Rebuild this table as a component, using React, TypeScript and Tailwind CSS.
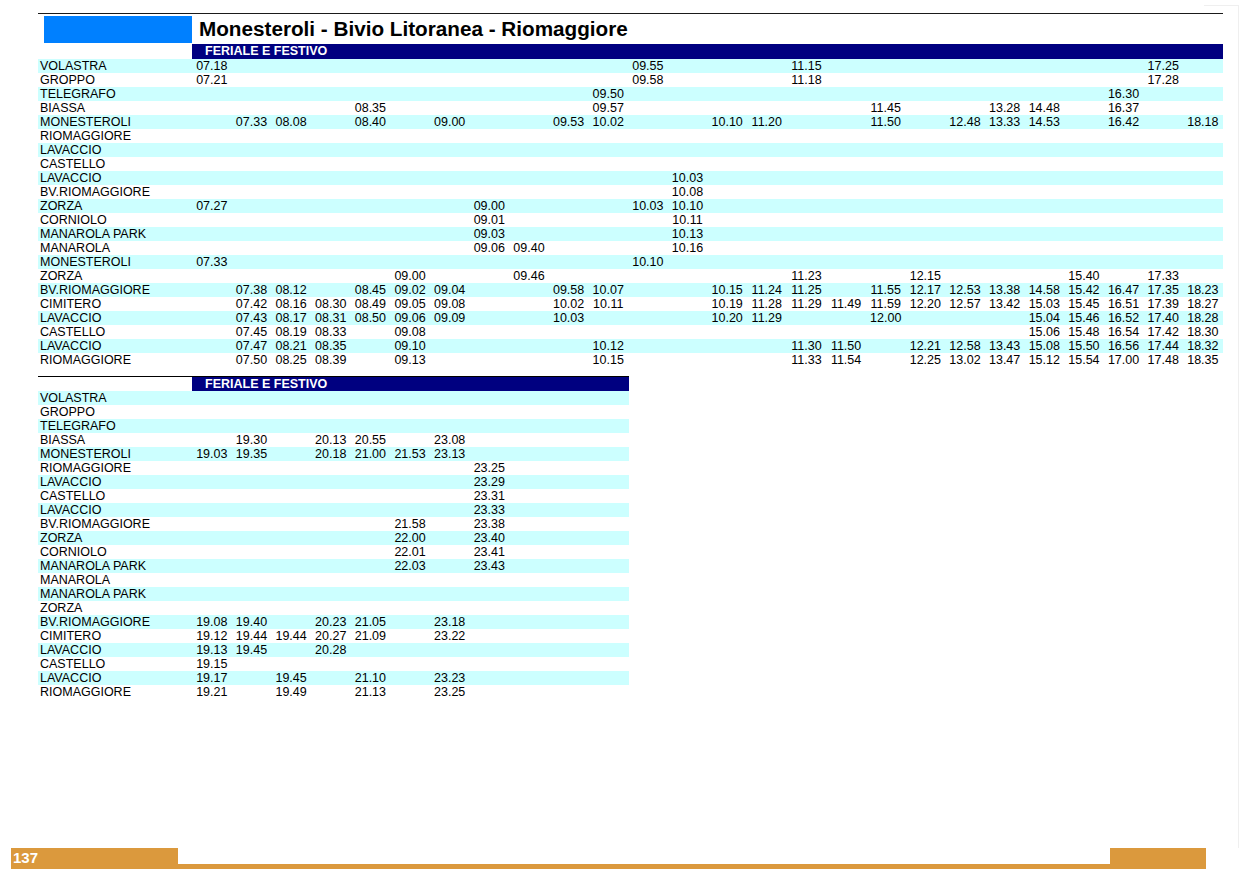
const STOPS_A = [
  ["VOLASTRA", "0:07.18 11:09.55 15:11.15 24:17.25"],
  ["GROPPO", "0:07.21 11:09.58 15:11.18 24:17.28"],
  ["TELEGRAFO", "10:09.50 23:16.30"],
  ["BIASSA", "4:08.35 10:09.57 17:11.45 20:13.28 21:14.48 23:16.37"],
  ["MONESTEROLI", "1:07.33 2:08.08 4:08.40 6:09.00 9:09.53 10:10.02 13:10.10 14:11.20 17:11.50 19:12.48 20:13.33 21:14.53 23:16.42 25:18.18"],
  ["RIOMAGGIORE", ""],
  ["LAVACCIO", ""],
  ["CASTELLO", ""],
  ["LAVACCIO", "12:10.03"],
  ["BV.RIOMAGGIORE", "12:10.08"],
  ["ZORZA", "0:07.27 7:09.00 11:10.03 12:10.10"],
  ["CORNIOLO", "7:09.01 12:10.11"],
  ["MANAROLA PARK", "7:09.03 12:10.13"],
  ["MANAROLA", "7:09.06 8:09.40 12:10.16"],
  ["MONESTEROLI", "0:07.33 11:10.10"],
  ["ZORZA", "5:09.00 8:09.46 15:11.23 18:12.15 22:15.40 24:17.33"],
  ["BV.RIOMAGGIORE", "1:07.38 2:08.12 4:08.45 5:09.02 6:09.04 9:09.58 10:10.07 13:10.15 14:11.24 15:11.25 17:11.55 18:12.17 19:12.53 20:13.38 21:14.58 22:15.42 23:16.47 24:17.35 25:18.23"],
  ["CIMITERO", "1:07.42 2:08.16 3:08.30 4:08.49 5:09.05 6:09.08 9:10.02 10:10.11 13:10.19 14:11.28 15:11.29 16:11.49 17:11.59 18:12.20 19:12.57 20:13.42 21:15.03 22:15.45 23:16.51 24:17.39 25:18.27"],
  ["LAVACCIO", "1:07.43 2:08.17 3:08.31 4:08.50 5:09.06 6:09.09 9:10.03 13:10.20 14:11.29 17:12.00 21:15.04 22:15.46 23:16.52 24:17.40 25:18.28"],
  ["CASTELLO", "1:07.45 2:08.19 3:08.33 5:09.08 21:15.06 22:15.48 23:16.54 24:17.42 25:18.30"],
  ["LAVACCIO", "1:07.47 2:08.21 3:08.35 5:09.10 10:10.12 15:11.30 16:11.50 18:12.21 19:12.58 20:13.43 21:15.08 22:15.50 23:16.56 24:17.44 25:18.32"],
  ["RIOMAGGIORE", "1:07.50 2:08.25 3:08.39 5:09.13 10:10.15 15:11.33 16:11.54 18:12.25 19:13.02 20:13.47 21:15.12 22:15.54 23:17.00 24:17.48 25:18.35"],
];

const STOPS_B = [
  ["VOLASTRA", ""],
  ["GROPPO", ""],
  ["TELEGRAFO", ""],
  ["BIASSA", "1:19.30 3:20.13 4:20.55 6:23.08"],
  ["MONESTEROLI", "0:19.03 1:19.35 3:20.18 4:21.00 5:21.53 6:23.13"],
  ["RIOMAGGIORE", "7:23.25"],
  ["LAVACCIO", "7:23.29"],
  ["CASTELLO", "7:23.31"],
  ["LAVACCIO", "7:23.33"],
  ["BV.RIOMAGGIORE", "5:21.58 7:23.38"],
  ["ZORZA", "5:22.00 7:23.40"],
  ["CORNIOLO", "5:22.01 7:23.41"],
  ["MANAROLA PARK", "5:22.03 7:23.43"],
  ["MANAROLA", ""],
  ["MANAROLA PARK", ""],
  ["ZORZA", ""],
  ["BV.RIOMAGGIORE", "0:19.08 1:19.40 3:20.23 4:21.05 6:23.18"],
  ["CIMITERO", "0:19.12 1:19.44 2:19.44 3:20.27 4:21.09 6:23.22"],
  ["LAVACCIO", "0:19.13 1:19.45 3:20.28"],
  ["CASTELLO", "0:19.15"],
  ["LAVACCIO", "0:19.17 2:19.45 4:21.10 6:23.23"],
  ["RIOMAGGIORE", "0:19.21 2:19.49 4:21.13 6:23.25"],
];

// "col:time col:time" -> array of cells
const toCells = (spec: string, n: number) => {
  const cells: string[] = Array(n).fill("");
  spec
    .split(" ")
    .filter(Boolean)
    .forEach((p) => {
      const [c, t] = p.split(":");
      cells[Number(c)] = t;
    });
  return cells;
};

const Timetable = ({
  rows,
  cols,
  gridClass,
}: {
  rows: string[][];
  cols: number;
  gridClass: string;
}) => (
  <div className="text-[12.5px] leading-[15px]">
    {rows.map(([name, spec], i) => (
      <div
        key={i}
        className={`grid h-[14px] ${gridClass} ${i % 2 === 0 ? "bg-[#ccffff]" : ""}`}
      >
        <div className="whitespace-nowrap pl-[2px]">{name}</div>
        {toCells(spec, cols).map((t, j) => (
          <div key={j} className="whitespace-nowrap text-center">
            {t}
          </div>
        ))}
      </div>
    ))}
  </div>
);

export default function App() {
  return (
    <div className="relative flex h-[875px] w-[1240px] flex-col overflow-hidden bg-white font-['Liberation_Sans',Arial,sans-serif] text-black">
      <div className="pointer-events-none absolute left-[1204px] top-[5px] h-[843px] w-[35px] border-r border-t border-[#efefef]" />

      <div className="ml-[38px] mt-[13px] w-[1185px] border-t border-[#1a1a1a]">
        <div className="flex h-[30px] items-center">
          <div className="ml-[6px] h-[27px] w-[148px] bg-[#0080ff]" />
          <h1 className="ml-[7px] text-[20.7px] font-bold leading-[30px]">
            Monesteroli - Bivio Litoranea - Riomaggiore
          </h1>
        </div>
        <div className="grid h-[15px] grid-cols-[154px_1fr]">
          <div />
          <div className="bg-[#000080] pl-[13px] text-[12.5px] font-bold leading-[15px] text-white">
            FERIALE E FESTIVO
          </div>
        </div>
        <Timetable
          rows={STOPS_A}
          cols={26}
          gridClass="grid-cols-[154px_repeat(26,39.65px)]"
        />
      </div>

      <div className="ml-[38px] mt-[9px] w-[591px] border-t border-black">
        <div className="grid h-[14px] grid-cols-[154px_1fr]">
          <div />
          <div className="bg-[#000080] pl-[13px] text-[12.5px] font-bold leading-[14px] text-white">
            FERIALE E FESTIVO
          </div>
        </div>
        <Timetable
          rows={STOPS_B}
          cols={11}
          gridClass="grid-cols-[154px_repeat(11,39.65px)]"
        />
      </div>

      <div className="mb-[6px] ml-[11px] mt-auto flex h-[21px] w-[1195px] bg-[#db993d]">
        <div className="w-[167px] pl-[2px] pt-[1px] text-[15px] font-bold leading-[18px] text-white">
          137
        </div>
        <div className="h-[16px] w-[932px] bg-white" />
      </div>
    </div>
  );
}
